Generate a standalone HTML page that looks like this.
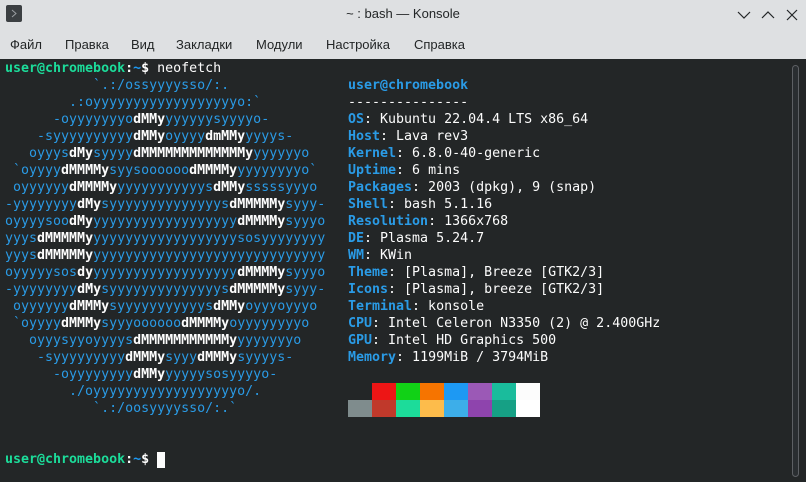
<!DOCTYPE html>
<html><head><meta charset="utf-8"><style>
*{margin:0;padding:0}
body{width:806px;height:482px;overflow:hidden;background:#dee0e2;position:relative;font-family:"Liberation Sans","Noto Sans CJK SC",sans-serif}
#title{position:absolute;left:0;top:0;width:806px;height:30px}
#icon{position:absolute;left:6px;top:5px;width:16px;height:17px;background:#3b3f42;border-radius:2px}
#ttl{position:absolute;left:0;width:806px;top:6px;text-align:center;font-size:13px;color:#232627}
.menu{position:absolute;top:37px;font-size:13px;color:#232627}
#term{position:absolute;left:0;top:59px;width:806px;height:423px;background:#232627}
pre{position:absolute;left:5px;font-family:"DejaVu Sans Mono","Liberation Mono",monospace;font-size:13.3px;line-height:17px;color:#fcfcfc;white-space:pre;letter-spacing:0}
.b{color:#2a9be6}.w{color:#fcfcfc;font-weight:bold}.l{color:#2a9be6;font-weight:bold}.g{color:#1cdc9a;font-weight:bold}.t{color:#1d99f3;font-weight:bold}
.sw{position:absolute;width:24px;height:17px}
</style></head><body>
<div id="title">
<div id="icon"><svg width="16" height="17"><path d="M6 5l4 3.5-4 3.5" stroke="#9a9ea2" stroke-width="1" fill="none"/></svg></div>
<div id="ttl">~ : bash — Konsole</div>
<svg style="position:absolute;left:736px;top:8px" width="66" height="14"><path d="M2 4l6 6 6-6" stroke="#232627" stroke-width="1.2" fill="none"/><path d="M26 10l6-6 6 6" stroke="#232627" stroke-width="1.2" fill="none"/><path d="M51 2l10 10M61 2l-10 10" stroke="#232627" stroke-width="1.2" fill="none"/></svg>
</div>
<div class="menu" style="left:10px">Файл</div>
<div class="menu" style="left:65px">Правка</div>
<div class="menu" style="left:131px">Вид</div>
<div class="menu" style="left:176px">Закладки</div>
<div class="menu" style="left:256px">Модули</div>
<div class="menu" style="left:326px">Настройка</div>
<div class="menu" style="left:414px">Справка</div>
<div id="term"></div>
<pre style="top:60px"><span class="g">user@chromebook</span><span class="w">:</span><span class="t">~</span><span class="w">$</span> neofetch
<span class="b">           `.:/ossyyyysso/:.</span>
<span class="b">        .:oyyyyyyyyyyyyyyyyyyo:`</span>
<span class="b">      -oyyyyyyyo</span><span class="w">dMMy</span><span class="b">yyyyyysyyyyo-</span>
<span class="b">    -syyyyyyyyyy</span><span class="w">dMMy</span><span class="b">oyyyy</span><span class="w">dmMMy</span><span class="b">yyyys-</span>
<span class="b">   oyyys</span><span class="w">dMy</span><span class="b">syyyy</span><span class="w">dMMMMMMMMMMMMMy</span><span class="b">yyyyyyo</span>
<span class="b"> `oyyyy</span><span class="w">dMMMMy</span><span class="b">syysoooooo</span><span class="w">dMMMMy</span><span class="b">yyyyyyyyo`</span>
<span class="b"> oyyyyyy</span><span class="w">dMMMMy</span><span class="b">yyyyyyyyyyys</span><span class="w">dMMy</span><span class="b">sssssyyyo</span>
<span class="b">-yyyyyyyy</span><span class="w">dMy</span><span class="b">syyyyyyyyyyyyyys</span><span class="w">dMMMMMy</span><span class="b">syyy-</span>
<span class="b">oyyyysoo</span><span class="w">dMy</span><span class="b">yyyyyyyyyyyyyyyyyy</span><span class="w">dMMMMy</span><span class="b">syyyo</span>
<span class="b">yyys</span><span class="w">dMMMMMy</span><span class="b">yyyyyyyyyyyyyyyyyysosyyyyyyyy</span>
<span class="b">yyys</span><span class="w">dMMMMMy</span><span class="b">yyyyyyyyyyyyyyyyyyyyyyyyyyyyy</span>
<span class="b">oyyyyysos</span><span class="w">dy</span><span class="b">yyyyyyyyyyyyyyyyyy</span><span class="w">dMMMMy</span><span class="b">syyyo</span>
<span class="b">-yyyyyyyy</span><span class="w">dMy</span><span class="b">syyyyyyyyyyyyyys</span><span class="w">dMMMMMy</span><span class="b">syyy-</span>
<span class="b"> oyyyyyy</span><span class="w">dMMMy</span><span class="b">syyyyyyyyyyys</span><span class="w">dMMy</span><span class="b">oyyyoyyyo</span>
<span class="b"> `oyyyy</span><span class="w">dMMMy</span><span class="b">syyyoooooo</span><span class="w">dMMMMy</span><span class="b">oyyyyyyyyo</span>
<span class="b">   oyyysyyoyyyys</span><span class="w">dMMMMMMMMMMMy</span><span class="b">yyyyyyyo</span>
<span class="b">    -syyyyyyyyy</span><span class="w">dMMMy</span><span class="b">syyy</span><span class="w">dMMMy</span><span class="b">syyyys-</span>
<span class="b">      -oyyyyyyyy</span><span class="w">dMMy</span><span class="b">yyyyysosyyyyo-</span>
<span class="b">        ./oyyyyyyyyyyyyyyyyyyo/.</span>
<span class="b">           `.:/oosyyyysso/:.`</span>


<span class="g">user@chromebook</span><span class="w">:</span><span class="t">~</span><span class="w">$</span> </pre>
<pre style="top:77px;left:348px"><span class="l">user@chromebook</span>
---------------
<span class="l">OS</span>: Kubuntu 22.04.4 LTS x86_64
<span class="l">Host</span>: Lava rev3
<span class="l">Kernel</span>: 6.8.0-40-generic
<span class="l">Uptime</span>: 6 mins
<span class="l">Packages</span>: 2003 (dpkg), 9 (snap)
<span class="l">Shell</span>: bash 5.1.16
<span class="l">Resolution</span>: 1366x768
<span class="l">DE</span>: Plasma 5.24.7
<span class="l">WM</span>: KWin
<span class="l">Theme</span>: [Plasma], Breeze [GTK2/3]
<span class="l">Icons</span>: [Plasma], breeze [GTK2/3]
<span class="l">Terminal</span>: konsole
<span class="l">CPU</span>: Intel Celeron N3350 (2) @ 2.400GHz
<span class="l">GPU</span>: Intel HD Graphics 500
<span class="l">Memory</span>: 1199MiB / 3794MiB</pre>
<div class="sw" style="left:372px;top:383px;background:#ed1515"></div>
<div class="sw" style="left:396px;top:383px;background:#11d116"></div>
<div class="sw" style="left:420px;top:383px;background:#f67400"></div>
<div class="sw" style="left:444px;top:383px;background:#1d99f3"></div>
<div class="sw" style="left:468px;top:383px;background:#9b59b6"></div>
<div class="sw" style="left:492px;top:383px;background:#1abc9c"></div>
<div class="sw" style="left:516px;top:383px;background:#fcfcfc"></div>
<div class="sw" style="left:348px;top:400px;background:#7f8c8d"></div>
<div class="sw" style="left:372px;top:400px;background:#c0392b"></div>
<div class="sw" style="left:396px;top:400px;background:#1cdc9a"></div>
<div class="sw" style="left:420px;top:400px;background:#fdbc4b"></div>
<div class="sw" style="left:444px;top:400px;background:#3daee9"></div>
<div class="sw" style="left:468px;top:400px;background:#8e44ad"></div>
<div class="sw" style="left:492px;top:400px;background:#16a085"></div>
<div class="sw" style="left:516px;top:400px;background:#ffffff"></div>
<div style="position:absolute;left:157px;top:452px;width:8px;height:16px;background:#fcfcfc"></div>
<div style="position:absolute;left:792px;top:65px;width:5px;height:410px;border:1px solid #5d6064;border-radius:4px;background:#2a2e31"></div>
</body></html>
